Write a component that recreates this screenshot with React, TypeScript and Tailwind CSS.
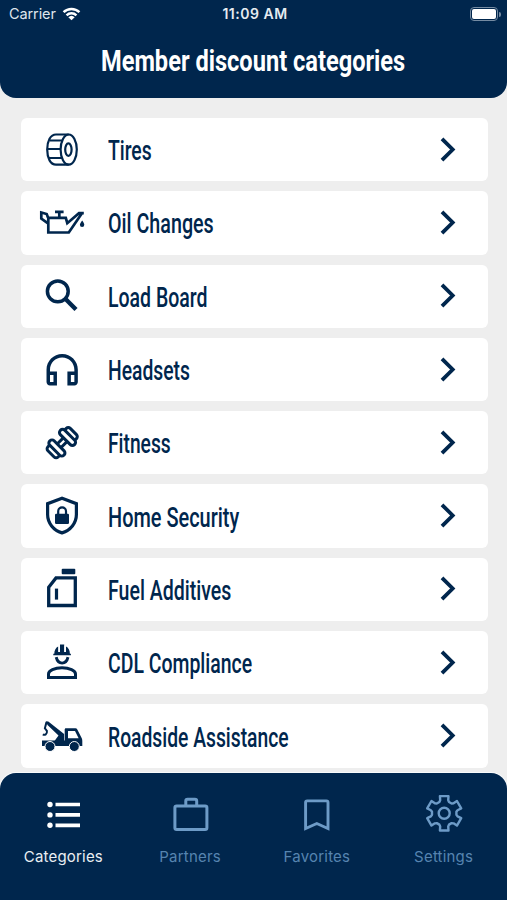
import { useLayoutEffect, useRef, useState, type ReactNode } from "react";

/** Condenses its text horizontally so that it fills the given width. */
function Condensed({ width, className, children }: { width: number; className: string; children: string }) {
  const ref = useRef<HTMLSpanElement>(null);
  const [scale, setScale] = useState(1);
  useLayoutEffect(() => {
    if (ref.current) setScale(width / ref.current.offsetWidth);
  }, [width, children]);
  return (
    <span className="block" style={{ width }}>
      <span ref={ref} className={`inline-block origin-left whitespace-nowrap ${className}`} style={{ transform: `scaleX(${scale})` }}>
        {children}
      </span>
    </span>
  );
}

function Icon({ children }: { children: ReactNode }) {
  return (
    <svg viewBox="0 0 48 48" className="size-12 shrink-0" fill="none" stroke="currentColor">
      {children}
    </svg>
  );
}

const Tire = () => (
  <Icon>
    <g strokeWidth="2.2">
      <ellipse cx="30.7" cy="23.6" rx="8.1" ry="15.1" />
      <ellipse cx="30.4" cy="23.6" rx="3.2" ry="6.3" />
      <path d="M30.7 8.5H18C12.5 8.5 9.2 15 9.2 23.600s3.300 15.100 8.800 15.100h12.700M12 14.500H24.500M9.500 23H22.500M11.500 32H24" />
    </g>
  </Icon>
);

const Oil = () => (
  <Icon>
    <g strokeWidth="2.700">
      <path d="M45.800 14.200H41L29.300 24.200 27.800 18.800H10.300V33.500H30.800L43.600 14.800M10 18.500 8.700 15 3.300 13.500v6l6.700 4.800M17 12.800h8.600M21.300 13v6" />
    </g>
    <path d="M44.200 21.500c1.400 2 2.100 3.100 2.100 4.300a2.200 2.200 0 0 1-4.400 0c0-1.200.9-2.300 2.300-4.300Z" fill="currentColor" stroke="none" />
  </Icon>
);

const Search = () => (
  <Icon>
    <circle cx="19.8" cy="19.3" r="10.4" strokeWidth="3.500" />
    <path d="m27.300 26.800 10.700 10.700" strokeWidth="4.400" />
  </Icon>
);

const Headset = () => (
  <Icon>
    <path
      transform="translate(3.300 2.900) scale(1.740)"
      fill="currentColor"
      stroke="none"
      d="M12 3c-4.970 0-9 4.030-9 9v7c0 1.100.9 2 2 2h4v-8H5v-1c0-3.870 3.130-7 7-7s7 3.130 7 7v1h-4v8h4c1.100 0 2-.9 2-2v-7c0-4.970-4.030-9-9-9zM7 15v4H5v-4h2zm12 4h-2v-4h2v4z"
    />
  </Icon>
);

const Dumbbell = () => (
  <Icon>
    <g transform="translate(24.200 23.700) rotate(-45)" strokeWidth="3">
      <path d="M-4.500-2.600H4.500M-4.500 2.600H4.500" />
      <rect x="-10.600" y="-10" width="6.200" height="20" rx="2.900" />
      <rect x="4.400" y="-10" width="6.200" height="20" rx="2.900" />
      <path d="M-10.600-7.200h-2.400a2.800 2.800 0 0 0-2.800 2.800v8.800a2.800 2.800 0 0 0 2.800 2.800h2.400M10.600-7.200h2.400a2.800 2.800 0 0 1 2.800 2.800v8.800a2.800 2.800 0 0 1-2.800 2.800h-2.400" />
    </g>
  </Icon>
);

const Shield = () => (
  <Icon>
    <path d="M24 6.300 9.600 11.700v10.800c0 8.500 5.900 15.800 14.400 18.400 8.500-2.600 14.400-9.900 14.400-18.400V11.700Z" strokeWidth="3.200" />
    <rect x="17" y="21.800" width="14" height="10.200" rx="1.200" fill="currentColor" stroke="none" />
    <path d="M20.200 22.500v-3.200a3.900 3.900 0 0 1 7.800 0v3.200" strokeWidth="2.200" />
  </Icon>
);

const Fuel = () => (
  <Icon>
    <path d="M18 12.900h19.300v27.600H10.700V22.300Z" strokeWidth="3.300" />
    <rect x="23.700" y="3.800" width="13.600" height="5.500" rx="1" fill="currentColor" stroke="none" />
    <path d="M18.500 23.600v11" strokeWidth="3.200" />
  </Icon>
);

const Worker = () => (
  <Icon>
    <g fill="currentColor" stroke="none">
      <path d="M15.300 16.300v-1.600h1c0-3.600 1.600-6.100 3.900-7.200v5.600h1.800V5.600h4.200v7.500H28V7.500c2.300 1.100 3.900 3.600 3.900 7.200h1v1.600Z" />
    </g>
    <path d="M21.200 6.500v6.600M27 6.500v6.600" stroke="#fff" strokeWidth="1.100" />
    <path d="M18.200 18.200c.9 3.900 3 5.900 5.900 5.900s5-2 5.900-5.900" strokeWidth="2.900" />
    <path d="M10.500 38.600V35c0-3.400 6-6.200 13.500-6.200S37.500 31.600 37.500 35v3.600Z" strokeWidth="3" />
  </Icon>
);

const TowTruck = () => (
  <Icon>
    <path d="M4 28.600h22.700V17.500c0-.7.6-1.200 1.200-1.200h9.600c.8 0 1.400.4 1.800 1.100l4.100 8.100c.6 1 .9 2 .9 3.200V34H4Z" fill="currentColor" stroke="none" />
    <path d="M30 19h7l3.600 7.200H30Z" fill="#fff" stroke="none" />
    <path d="m7.800 9.200 2.500.3 15.800 12.600v6.800H16.500l4-5.500L9.500 13Z" fill="currentColor" stroke="none" />
    <path d="m8.500 10-1.600 6.300 2 2.700c.5 3.200-2.200 4.500-4.100 3.300" strokeWidth="2" />
    <circle cx="12" cy="34.500" r="5" fill="currentColor" stroke="#fff" strokeWidth="1" />
    <circle cx="36.300" cy="34.500" r="5" fill="currentColor" stroke="#fff" strokeWidth="1" />
  </Icon>
);

const List = () => (
  <Icon>
    <path d="M16.500 13.500H41M16.500 23.900H41M16.500 34.300H41" strokeWidth="3.700" />
    <g fill="currentColor" stroke="none">
      <circle cx="11" cy="13.500" r="2.700" />
      <circle cx="11" cy="23.900" r="2.700" />
      <circle cx="11" cy="34.300" r="2.700" />
    </g>
  </Icon>
);

const Briefcase = () => (
  <Icon>
    <rect x="8.900" y="15" width="32" height="23.500" rx="1.800" strokeWidth="3" />
    <path d="M19.800 15v-5c0-1 .8-1.800 1.800-1.800h7.300c1 0 1.800.8 1.800 1.800v5" strokeWidth="3" />
  </Icon>
);

const Bookmark = () => (
  <Icon>
    <path d="M12.600 37.500V11.500c0-.9.7-1.600 1.600-1.600h19.200c.9 0 1.600.7 1.600 1.600v26l-11.200-5Z" strokeWidth="2.900" />
  </Icon>
);

// One tooth as [angle, radius] pairs, repeated every 60 degrees.
const tooth = [
  [-23, 12.3],
  [-17, 13.7],
  [-14, 17.7],
  [14, 17.7],
  [17, 13.7],
  [23, 12.3],
];
const gearPoints = [0, 60, 120, 180, 240, 300]
  .flatMap((turn) =>
    tooth.map(([angle, r]) => {
      const a = ((turn + angle) * Math.PI) / 180;
      return `${(24.2 + r * Math.sin(a)).toFixed(2)},${(22.3 - r * Math.cos(a)).toFixed(2)}`;
    }),
  )
  .join(" ");

const Gear = () => (
  <Icon>
    <polygon points={gearPoints} strokeWidth="2.400" strokeLinejoin="round" />
    <circle cx="24.200" cy="22.300" r="5.500" strokeWidth="2.400" />
  </Icon>
);

const categories = [
  { name: "Tires", width: 43.5, icon: <Tire /> },
  { name: "Oil Changes", width: 105.5, icon: <Oil /> },
  { name: "Load Board", width: 99.5, icon: <Search /> },
  { name: "Headsets", width: 82, icon: <Headset /> },
  { name: "Fitness", width: 62.5, icon: <Dumbbell /> },
  { name: "Home Security", width: 131, icon: <Shield /> },
  { name: "Fuel Additives", width: 123.5, icon: <Fuel /> },
  { name: "CDL Compliance", width: 144.5, icon: <Worker /> },
  { name: "Roadside Assistance", width: 180.5, icon: <TowTruck /> },
];

const tabs = [
  { name: "Categories", icon: <List />, active: true },
  { name: "Partners", icon: <Briefcase />, active: false },
  { name: "Favorites", icon: <Bookmark />, active: false },
  { name: "Settings", icon: <Gear />, active: false },
];

export default function App() {
  return (
    <div className="flex h-[900px] w-[507px] flex-col overflow-hidden bg-[#eeeeee] font-['Inter',sans-serif]">
      <header className="h-[98px] shrink-0 rounded-b-[16px] bg-[#00264d] text-white">
        <div className="grid h-7 grid-cols-3 items-center pr-[6px] pl-[9px] text-[14.500px] leading-7">
          <div className="flex items-center gap-[6px] text-[#dfe5ec]">
            <span className="tracking-[-0.1px]">Carrier</span>
            <svg viewBox="0 0 20 15" className="h-[14px] w-[19px]" fill="none" stroke="#fff" strokeWidth="2.600">
              <path d="M1.500 5.600C6.200.9 13.800.9 18.500 5.600M4.700 8.900c3-2.900 7.600-2.900 10.600 0" />
              <path d="M10 14.200 6.600 10.900a4.900 4.900 0 0 1 6.800 0Z" fill="#fff" stroke="none" />
            </svg>
          </div>
          <div className="text-center text-[14px] font-semibold tracking-[0.500px] whitespace-nowrap text-[#e6ebf0]">11:09 AM</div>
          <div className="flex items-center justify-end gap-px">
            <div className="h-[14px] w-[28px] rounded-[4px] border border-[#758ba2] p-px">
              <div className="h-full rounded-[2px] bg-white" />
            </div>
            <div className="h-[5px] w-[2px] rounded-r-full bg-[#758ba2]" />
          </div>
        </div>
        <h1 className="flex h-[66px] items-center justify-center">
          <Condensed width={304.500} className="font-['Roboto',sans-serif] text-[30px] leading-[64px] font-bold">
            Member discount categories
          </Condensed>
        </h1>
      </header>

      <main className="flex min-h-0 flex-1 flex-col gap-[10px] pt-5 pr-[19px] pl-[20.500px] text-[#00264d]">
        {categories.map((c) => (
          <button key={c.name} className="flex h-[63.300px] shrink-0 items-center rounded-[6px] bg-white pr-[31px] pl-[17.500px] text-left">
            {c.icon}
            <span className="ml-[22px] flex-1 pt-[3px]">
              <Condensed width={c.width} className="font-['Roboto',sans-serif] text-[28px] leading-8 font-medium">
                {c.name}
              </Condensed>
            </span>
            <svg viewBox="0 0 18 26" className="h-[26px] w-[18px]" fill="none" stroke="currentColor" strokeWidth="3.800">
              <path d="M3 1.800 13.700 12.500 3 23.200" />
            </svg>
          </button>
        ))}
      </main>

      <nav className="grid h-[127px] shrink-0 grid-cols-4 rounded-t-[16px] bg-[#00264d] pt-[18px] shadow-[0_0_0_1px_#f8fafb]">
        {tabs.map((t) => (
          <button key={t.name} className={t.active ? "flex flex-col items-center text-white" : "flex flex-col items-center text-[#6d9bc7]"}>
            {t.icon}
            <span
              className={
                t.active
                  ? "mt-[8px] text-[15px] leading-5 tracking-[0.200px] text-[#e9eef3]"
                  : "mt-[8px] text-[15px] leading-5 tracking-[0.200px] text-[#5684b0]"
              }
            >
              {t.name}
            </span>
          </button>
        ))}
      </nav>
    </div>
  );
}
